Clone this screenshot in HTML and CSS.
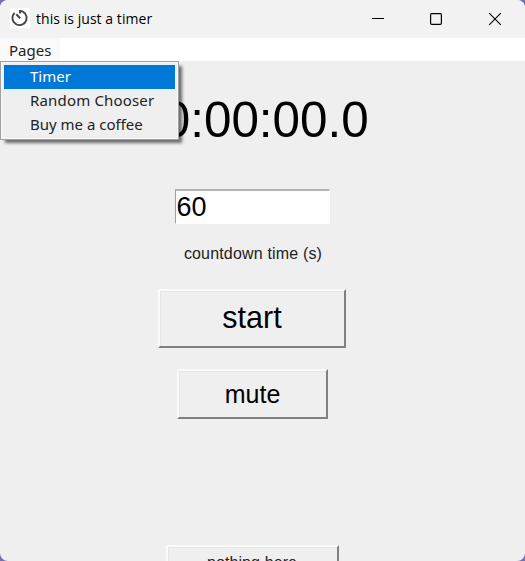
FILE: index.html
```html
<!DOCTYPE html>
<html lang="en">
<head>
<meta charset="utf-8">
<title>this is just a timer</title>
<link rel="stylesheet" href="styles.css">
</head>
<body>
<div class="window">
  <header class="titlebar">
    <svg class="app-icon" width="20" height="20" viewBox="0 0 20 20" fill="none" stroke="#484848" stroke-width="1.9">
      <path d="M4.6 4.9A7.1 7.1 0 1 0 10 2.9V5.6"/>
      <path d="M6.3 6.3L10.2 10.4" stroke-width="2.1"/>
    </svg>
    <span class="title">this is just a timer</span>
    <div class="controls">
      <svg width="58" height="38" viewBox="0 0 58 38"><path d="M5 18.5h12" stroke="#000"/></svg>
      <svg width="58" height="38" viewBox="0 0 58 38"><rect x="5.6" y="13.6" width="10.8" height="10.8" rx="1.2" fill="none" stroke="#000" stroke-width="1.2"/></svg>
      <svg width="42" height="38" viewBox="0 0 42 38"><path d="M6.2 13.2l11.6 11.6M17.8 13.2L6.2 24.8" stroke="#000" stroke-width="1.1"/></svg>
    </div>
  </header>
  <nav class="menubar">
    <div class="menu-title">Pages</div>
    <ul class="menu">
      <li class="selected">Timer</li>
      <li class="chooser">Random Chooser</li>
      <li>Buy me a coffee</li>
    </ul>
  </nav>
  <main class="content">
    <div class="clock">00:00:00.0</div>
    <div class="entry">60</div>
    <div class="caption">countdown time (s)</div>
    <button class="btn start">start</button>
    <button class="btn mute">mute</button>
    <button class="btn nothing">nothing here</button>
  </main>
</div>
</body>
</html>
```
FILE: styles.css
```css
* { box-sizing: border-box; }
body { margin: 0; background: #7470b4; overflow: hidden; }
.window {
  width: 525px; height: 561px; overflow: hidden;
  border-radius: 8px; background: #efefef;
  display: flex; flex-direction: column;
}
.titlebar {
  height: 38px; flex: none; display: flex; align-items: center;
  padding-left: 10px; background: #f2f2f2;
}
.app-icon { background: #fff; flex: none; margin-top: -2px; }
.title {
  margin-left: 6px; color: #000; white-space: nowrap;
  font: 14px/20px "Open Sans", sans-serif; letter-spacing: 0.05px;
}
.controls { margin-left: auto; display: flex; }
.controls svg { display: block; }
.menubar {
  position: relative; height: 23px; flex: none; background: #fff;
  font: 15px/24px "Noto Sans", sans-serif; color: #222;
}
.menu-title { width: 60px; height: 23px; padding-left: 9px; background: #fafafa; }
.menu {
  position: absolute; z-index: 1; left: 0; top: 23px;
  width: 179px; height: 79px; margin: 0; padding: 3px 3px 2px; list-style: none;
  background: #efefef; border: 1px solid #a0a0a0;
  box-shadow: 4px 4px 3px -1px rgba(0,0,0,.55), inset 0 0 0 1px #f8f8f8;
  white-space: nowrap;
}
.menu li { height: 24px; line-height: 23px; padding-left: 26px; }
.menu .chooser { letter-spacing: 0.17px; }
.menu .selected { background: #0078d7; color: #fff; }
.content {
  flex: none; height: 500px; display: flex; flex-direction: column;
  align-items: center; color: #000;
  font-family: "Liberation Sans", Arial, sans-serif;
}
.clock {
  margin: 31px 21px 0 0; height: 56px; font-size: 49.4px; line-height: 56px;
}
.entry {
  width: 155px; height: 35px; margin: 41px 21px 0 0; padding-left: 1px;
  border: 1px solid #fff; border-top: 2px solid #b4b4b4; border-left: 1px solid #a0a0a0;
  background: #fff; font-size: 27px; line-height: 32px;
}
.caption {
  margin: 20px 19px 0 0; height: 20px; font-size: 16px; line-height: 20px;
  letter-spacing: 0.17px; color: #222;
}
.btn {
  flex: none; padding: 0; font-family: inherit; color: #000; background: #efefef;
  border: 2px solid; border-color: #fafafa #808080 #808080 #fafafa;
  box-shadow: inset 1px 1px #e6e6e6;
}
.start { width: 188px; height: 59px; margin: 25px 21px 0 0; padding-bottom: 3px; font-size: 30.5px; }
.mute { width: 151px; height: 50px; margin: 21px 20px 0 0; font-size: 25px; }
.nothing { width: 173px; height: 38px; margin: 126px 21px 0 0; padding-bottom: 2px; font-size: 16px; letter-spacing: 0.1px; color: #222; }
```
